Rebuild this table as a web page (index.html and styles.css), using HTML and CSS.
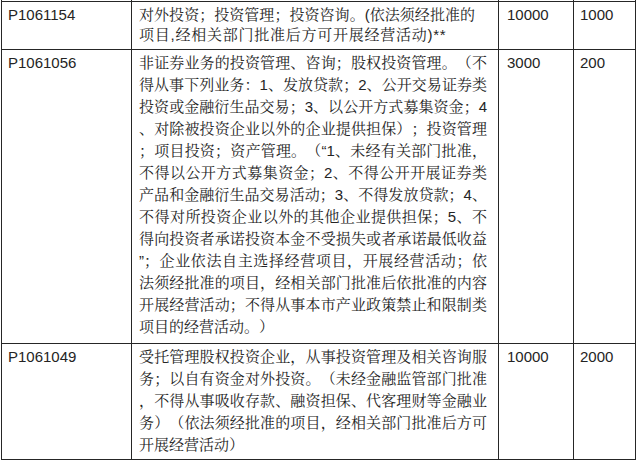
FILE: index.html
```html
<!DOCTYPE html>
<html lang="zh-CN">
<head>
<meta charset="utf-8">
<title>经营范围</title>
<link rel="stylesheet" href="styles.css">
</head>
<body>
<div class="sheet">
  <div class="cell stub"></div>
  <div class="cell stub"></div>
  <div class="cell stub"></div>
  <div class="cell stub"></div>

  <div class="cell code r1">P1061154</div>
  <div class="cell desc r1 loose">
    <span class="ln first">对外投资；投资管理；投资咨询。(依法须经批准的</span>
    <span class="ln end">项目,经相关部门批准后方可开展经营活动)**</span>
  </div>
  <div class="cell num r1">10000</div>
  <div class="cell cap r1">1000</div>

  <div class="cell code r2">P1061056</div>
  <div class="cell desc r2">
    <span class="ln">非证券业务的投资管理、咨询；股权投资管理。（不</span>
    <span class="ln">得从事下列业务：1、发放贷款；2、公开交易证券类</span>
    <span class="ln">投资或金融衍生品交易；3、以公开方式募集资金；4</span>
    <span class="ln">、对除被投资企业以外的企业提供担保）；投资管理</span>
    <span class="ln">；项目投资；资产管理。（“1、未经有关部门批准，</span>
    <span class="ln">不得以公开方式募集资金；2、不得公开开展证券类</span>
    <span class="ln">产品和金融衍生品交易活动；3、不得发放贷款；4、</span>
    <span class="ln">不得对所投资企业以外的其他企业提供担保；5、不</span>
    <span class="ln">得向投资者承诺投资本金不受损失或者承诺最低收益</span>
    <span class="ln">”；企业依法自主选择经营项目，开展经营活动；依</span>
    <span class="ln">法须经批准的项目，经相关部门批准后依批准的内容</span>
    <span class="ln">开展经营活动；不得从事本市产业政策禁止和限制类</span>
    <span class="ln end">项目的经营活动。）</span>
  </div>
  <div class="cell num r2">3000</div>
  <div class="cell cap r2">200</div>

  <div class="cell code r3">P1061049</div>
  <div class="cell desc r3">
    <span class="ln">受托管理股权投资企业，从事投资管理及相关咨询服</span>
    <span class="ln">务；以自有资金对外投资。（未经金融监管部门批准</span>
    <span class="ln">，不得从事吸收存款、融资担保、代客理财等金融业</span>
    <span class="ln">务）（依法须经批准的项目，经相关部门批准后方可</span>
    <span class="ln end">开展经营活动）</span>
  </div>
  <div class="cell num r3">10000</div>
  <div class="cell cap r3">2000</div>
</div>
</body>
</html>
```

FILE: styles.css
```css
html, body {
  margin: 0;
  padding: 0;
  background: #ffffff;
}

.sheet {
  display: grid;
  grid-template-columns: 130px 367px 75px 62px;
  margin-left: 1px;
  border-left: 1px solid #262626;
  font-family: "Liberation Sans", "Noto Serif CJK SC", "Noto Sans CJK SC", sans-serif;
  font-size: 15px;
  color: #242424;
  text-spacing-trim: space-all;
}

.cell {
  border-right: 1px solid #262626;
  border-bottom: 1px solid #262626;
  padding: 2px 6px 5px 6px;
  line-height: 22px;
  min-width: 0;
}

.stub {
  height: 1px;
  padding: 0;
}

.r1 {
  line-height: 20px;
  padding-top: 3px;
  padding-bottom: 4px;
}

.r3 {
  padding-bottom: 3px;
}

.desc {
  padding-left: 7px;
  padding-right: 11px;
}

.num {
  padding-left: 8px;
}

.ln {
  display: block;
  text-align: justify;
  text-align-last: justify;
}

.ln.end {
  text-align-last: left;
}

.loose .ln {
  text-align: left;
  text-align-last: left;
  white-space: nowrap;
  letter-spacing: 0.75px;
}

.loose .ln.first {
  width: 336px;
  white-space: normal;
  letter-spacing: 0;
  text-align: justify;
  text-align-last: justify;
}
```
